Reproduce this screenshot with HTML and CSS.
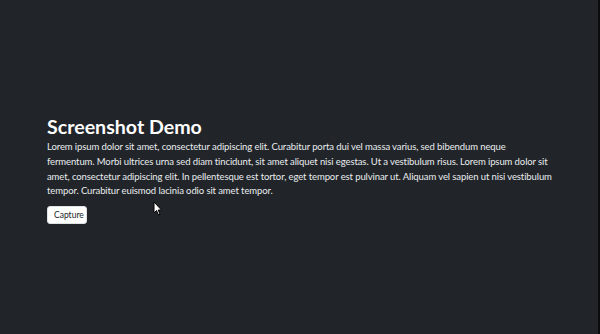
FILE: index.html
```html
<!DOCTYPE html>
<html lang="en">
<head>
    <meta charset="UTF-8">
    <meta name="viewport" content="width=device-width, initial-scale=1.0">
    <title>Screenshot Demo</title>
    <link rel="stylesheet" href="styles.css">
</head>
<body>

<div class="page">
    <div class="content">
        <h1>Screenshot Demo</h1>
        <p>Lorem ipsum dolor sit amet, consectetur adipiscing elit. Curabitur porta dui vel massa varius, sed bibendum neque fermentum. Morbi ultrices urna sed diam tincidunt, sit amet aliquet nisi egestas. Ut a vestibulum risus. Lorem ipsum dolor sit amet, consectetur adipiscing elit. In pellentesque est tortor, eget tempor est pulvinar ut. Aliquam vel sapien ut nisi vestibulum tempor. Curabitur euismod lacinia odio sit amet tempor.</p>
        <button class="capture-btn">Capture</button>
    </div>
</div>

<svg class="cursor" width="12" height="16" viewBox="0 0 12 16">
    <path d="M1 1 L1 12 L3.5 9.5 L5.5 14 L7 13.3 L5.2 9 L8.5 9 Z" fill="#fff" stroke="#000" stroke-width="1"/>
</svg>

</body>
</html>
```

FILE: styles.css
```css
html {
    background-color: #212529;
}
body {
    margin: 0;
    font-family: 'Lato', 'Noto Sans', sans-serif;
    color: #f8f9fa;
    background-color: #212529;
    border-right: 2px solid #0b0c0e;
}
.page {
    display: flex;
    flex-direction: column;
    justify-content: center;
    min-height: 334px;
    padding: 5px 45px 0 47px;
    box-sizing: border-box;
}
.content h1 {
    margin: 0 0 1px 0;
    font-size: 19.6px;
    font-weight: 700;
    line-height: 24px;
    color: #ffffff;
}
.content p {
    margin: 0 0 3px 0;
    font-size: 9.5px;
    letter-spacing: -0.1px;
    line-height: 14.8px;
    color: #e9ecef;
}
.capture-btn {
    font-family: inherit;
    font-size: 8.5px;
    padding: 3px 6px;
    background-color: #ffffff;
    color: #212529;
    border: 1px solid #dee2e6;
    border-radius: 3px;
    height: 18px;
    width: 40px;
    line-height: 10px;
}
.cursor {
    position: absolute;
    left: 153px;
    top: 201px;
}
```
